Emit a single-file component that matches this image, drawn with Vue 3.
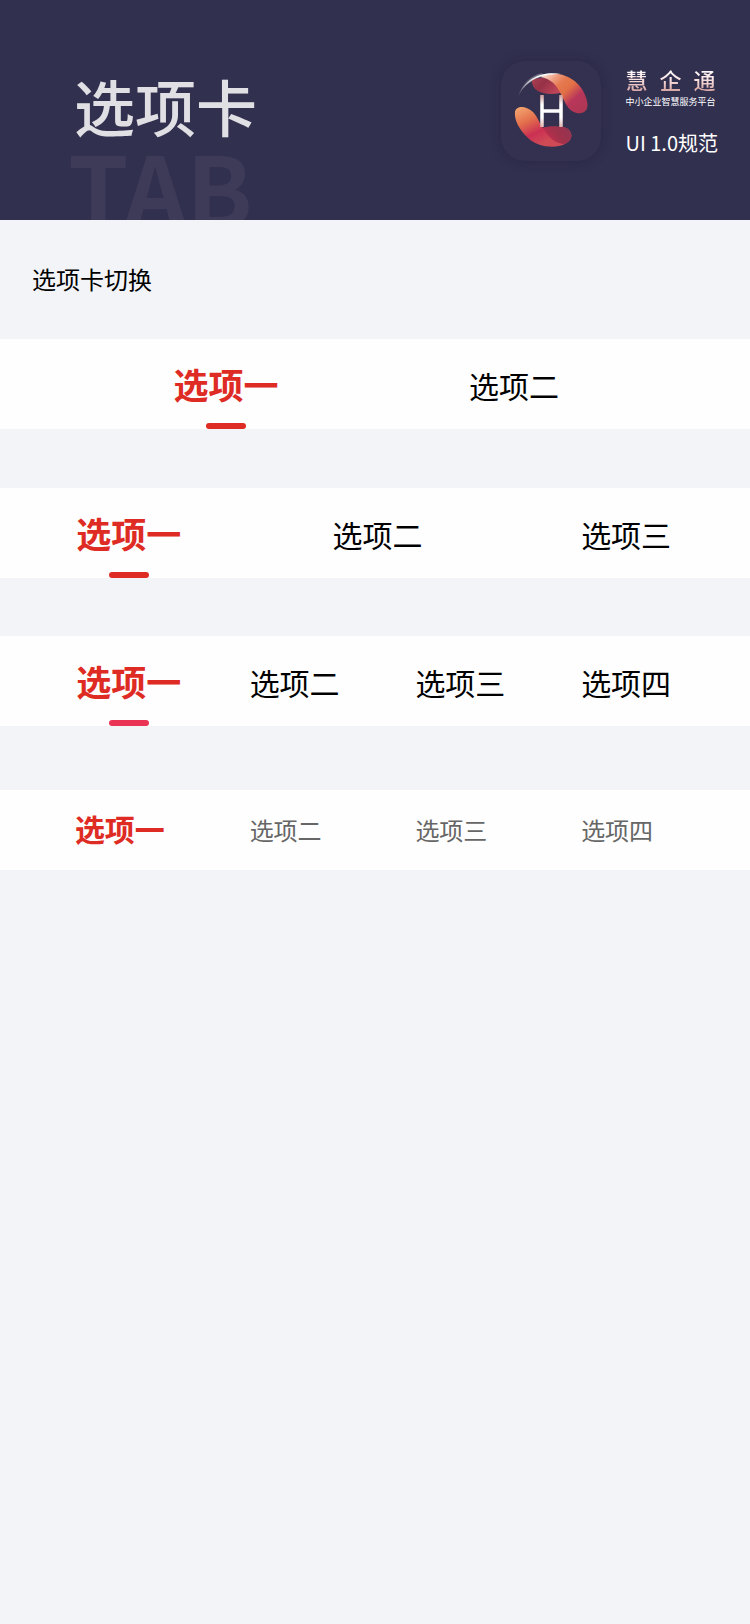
<script setup>
import { reactive } from 'vue'

const groups = reactive([
  { id: 'two', kind: 'pair', active: 0, items: ['选项一', '选项二'] },
  { id: 'three', kind: 'spread', active: 0, items: ['选项一', '选项二', '选项三'] },
  { id: 'four', kind: 'rose', active: 0, items: ['选项一', '选项二', '选项三', '选项四'] },
  { id: 'plain', kind: 'compact', active: 0, items: ['选项一', '选项二', '选项三', '选项四'] },
])
const brand = ['慧', '企', '通']
</script>

<template>
  <div class="page">
    <header class="banner">
      <div class="heading">
        <h1>选项卡</h1>
        <div class="watermark" aria-hidden="true">TAB</div>
      </div>
      <div class="brand">
        <div class="app-icon">
          <svg viewBox="0 0 100 100" aria-hidden="true">
            <defs>
              <linearGradient id="arc" x1="17" y1="36" x2="44" y2="14" gradientUnits="userSpaceOnUse">
                <stop offset="0" stop-color="#fff" stop-opacity="0" />
                <stop offset=".6" stop-color="#fff" stop-opacity=".8" />
                <stop offset="1" stop-color="#fff" />
              </linearGradient>
              <linearGradient id="veil" x1="17" y1="36" x2="36" y2="16" gradientUnits="userSpaceOnUse">
                <stop offset="0" stop-color="#fff" stop-opacity="0" />
                <stop offset="1" stop-color="#fff" stop-opacity=".3" />
              </linearGradient>
              <linearGradient id="topOuter" x1="40" y1="12" x2="80" y2="54" gradientUnits="userSpaceOnUse">
                <stop offset="0" stop-color="#fff0ec" />
                <stop offset=".22" stop-color="#eda083" />
                <stop offset=".36" stop-color="#e67a50" />
                <stop offset=".52" stop-color="#e27046" />
                <stop offset=".72" stop-color="#b8365a" />
                <stop offset="1" stop-color="#ad3753" />
              </linearGradient>
              <linearGradient id="topInner" x1="34" y1="16" x2="54" y2="34" gradientUnits="userSpaceOnUse">
                <stop offset="0" stop-color="#a83e50" />
                <stop offset=".4" stop-color="#963147" />
                <stop offset="1" stop-color="#c2465a" />
              </linearGradient>
              <linearGradient id="bottomOuter" x1="20" y1="47" x2="38" y2="84" gradientUnits="userSpaceOnUse">
                <stop offset="0" stop-color="#f2a06c" />
                <stop offset=".35" stop-color="#e36f4c" />
                <stop offset=".7" stop-color="#cb3053" />
                <stop offset="1" stop-color="#d04a55" />
              </linearGradient>
              <linearGradient id="bottomInner" x1="66" y1="68" x2="48" y2="82" gradientUnits="userSpaceOnUse">
                <stop offset="0" stop-color="#963450" />
                <stop offset=".5" stop-color="#a2314a" />
                <stop offset="1" stop-color="#c42d4f" />
              </linearGradient>
              <linearGradient id="letter" x1="0" y1="34" x2="0" y2="66" gradientUnits="userSpaceOnUse">
                <stop offset="0" stop-color="#cf9a98" />
                <stop offset=".3" stop-color="#fff" />
                <stop offset=".7" stop-color="#fff" />
                <stop offset="1" stop-color="#e0b4b0" />
              </linearGradient>
            </defs>
            <path d="M17 36C20 24 29 14 42 12L32 20C26 23 20 28 17 36Z" fill="url(#veil)" />
            <path d="M31 19C30 28 39 33 50 33C55 33 59 32 62 31C60 20 48 13 31 19Z" fill="url(#topInner)" />
            <path d="M39 16C58 7 81 18 86 40C89 52 79 55 71 50C60 43 61 19 39 16Z" fill="url(#topOuter)" />
            <path d="M17 36C22 20 38 9 60 13C48 13 39 15 32 19C25 23 20 29 17 36Z" fill="url(#arc)" />
            <path d="M14 51C15 45 24 44 32 51C37 56 38 62 42 67C50 65 62 65 67 68C72 72 72 79 64 83C54 88 36 86 27 77C18 69 13 58 14 51Z" fill="url(#bottomOuter)" />
            <path d="M42 67C50 65 62 65 67 68C72 72 72 79 64 83C54 83 47 76 42 67Z" fill="url(#bottomInner)" />
            <path d="M41 34V66M60 34V66M41 50H60" fill="none" stroke="url(#letter)" stroke-width="3.5" />
          </svg>
        </div>
        <div class="brand-text">
          <div class="name"><span v-for="word in brand" :key="word">{{ word }}</span></div>
          <div class="slogan">中小企业智慧服务平台</div>
          <div class="version">UI 1.0规范</div>
        </div>
      </div>
    </header>

    <main>
      <h2>选项卡切换</h2>
      <div v-for="group in groups" :key="group.id" class="tabs" :class="group.kind" role="tablist" aria-label="选项卡切换">
        <button
          v-for="(item, i) in group.items"
          :key="item"
          type="button"
          role="tab"
          :aria-selected="group.active === i"
          :class="{ active: group.active === i }"
          @click="group.active = i"
        >
          {{ item }}
        </button>
      </div>
    </main>
  </div>
</template>

<style>
body {
  background: #f3f4f8;
}
</style>

<style scoped>
.page {
  font-family: "Noto Sans CJK SC", sans-serif;
  color: #000;
}

.banner {
  display: flex;
  justify-content: space-between;
  height: 220px;
  box-sizing: border-box;
  padding: 0 32px 0 68px;
  overflow: hidden;
  background: #32304f;
}

.heading {
  padding-top: 62px;
}

h1 {
  margin: 0;
  padding-left: 6px;
  font-size: 61px;
  font-weight: 500;
  line-height: 88px;
  color: #e0e0e4;
}

.watermark {
  font-size: 97px;
  font-weight: 700;
  line-height: 72px;
  color: #3d3b58;
}

.brand {
  display: flex;
  align-items: flex-start;
  gap: 24px;
  padding-top: 61px;
}

.app-icon {
  width: 100px;
  height: 100px;
  border-radius: 24px;
  background: #33314f;
  box-shadow: 0 0 12px rgba(20, 18, 45, 0.3);
}

.app-icon svg {
  display: block;
  width: 100%;
}

.brand-text {
  padding-top: 2px;
  color: #fff;
}

.name {
  display: flex;
  justify-content: space-between;
  width: 90px;
  font-size: 22px;
  font-weight: 500;
  line-height: 32px;
}

.name span {
  color: transparent;
  background: linear-gradient(#fff 20%, #fbe3e3 50%, #d9aaa8 85%);
  background-clip: text;
}

.slogan {
  margin-top: 2px;
  font-size: 9px;
  line-height: 10px;
}

.version {
  margin-top: 21px;
  font-size: 20px;
  line-height: 30px;
}

h2 {
  margin: 0;
  padding: 41px 32px 43px;
  font-size: 24px;
  font-weight: 400;
  line-height: 35px;
}

.tabs {
  display: flex;
  justify-content: space-between;
  height: 90px;
  padding: 0 41px 0 46px;
  background: #fefefe;
}

.tabs button {
  position: relative;
  width: 25%;
  padding: 2px 0 0;
  border: 0;
  background: none;
  font: inherit;
  font-size: 30px;
  line-height: 44px;
  color: inherit;
  white-space: nowrap;
  cursor: pointer;
}

.tabs button.active {
  padding: 0;
  font-size: 35px;
  font-weight: 700;
  color: #de2c25;
}

.tabs button.active::after {
  content: "";
  position: absolute;
  bottom: 0;
  left: 50%;
  width: 40px;
  height: 6px;
  margin-left: -20px;
  border-radius: 3px;
  background: #de2c25;
}

.tabs.pair {
  padding: 0 92px 0 82px;
}

.pair button {
  width: 50%;
}

.spread {
  margin-top: 59px;
}

.rose {
  margin-top: 58px;
}

.rose button.active::after {
  background: #ea3455;
}

.tabs.compact {
  height: 80px;
  margin-top: 64px;
  padding: 0 50px 0 37px;
}

.compact button {
  padding: 0;
  font-size: 24px;
  color: #666;
}

.compact button.active {
  padding: 0 0 4px;
  font-size: 30px;
}

.compact button.active::after {
  display: none;
}
</style>
